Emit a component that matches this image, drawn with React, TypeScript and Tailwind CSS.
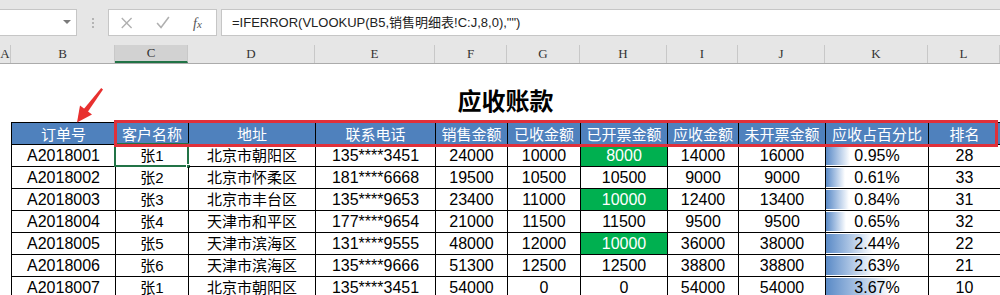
import React from "react";

const cols = [104, 73, 127, 120, 72, 73, 87, 71, 87, 103, 72];
const letters = ["B", "C", "D", "E", "F", "G", "H", "I", "J", "K", "L"];
const headers = ["订单号", "客户名称", "地址", "联系电话", "销售金额", "已收金额", "已开票金额", "应收金额", "未开票金额", "应收占百分比", "排名"];

const rows: [string, string, string, string, number, number, number, number, number, number, number, boolean][] = [
  ["A2018001", "张1", "北京市朝阳区", "135****3451", 24000, 10000, 8000, 14000, 16000, 0.95, 28, true],
  ["A2018002", "张2", "北京市怀柔区", "181****6668", 19500, 10500, 10500, 9000, 9000, 0.61, 33, false],
  ["A2018003", "张3", "北京市丰台区", "135****9653", 23400, 11000, 10000, 12400, 13400, 0.84, 31, true],
  ["A2018004", "张4", "天津市和平区", "177****9654", 21000, 11500, 11500, 9500, 9500, 0.65, 32, false],
  ["A2018005", "张5", "天津市滨海区", "131****9555", 48000, 12000, 10000, 36000, 38000, 2.44, 22, true],
  ["A2018006", "张6", "天津市滨海区", "135****9666", 51300, 12500, 12500, 38800, 38800, 2.63, 21, false],
  ["A2018007", "张1", "北京市朝阳区", "135****3451", 54000, 0, 0, 54000, 54000, 3.67, 10, false],
];

const gridCols = "grid grid-cols-[104px_73px_127px_120px_72px_73px_87px_71px_87px_103px_72px]";

export default function App() {
  return (
    <div
      className="relative w-[1000px] h-[295px] overflow-hidden bg-white"
      style={{ fontFamily: '"Liberation Sans", "Noto Sans CJK SC", sans-serif' }}
    >
      {/* Formula bar */}
      <div className="h-[45px] bg-[#e6e6e6] flex items-start pt-[9px]">
        <div className="relative w-[77px] h-[27px] bg-white border border-l-0 border-[#c6c6c6]">
          <div className="absolute left-[63px] top-[10px] w-0 h-0 border-l-[4px] border-r-[4px] border-t-[4px] border-l-transparent border-r-transparent border-t-[#7a7a7a]" />
        </div>
        <div className="w-[31px] h-[27px] flex flex-col items-center justify-center gap-[2px]">
          <div className="w-[2px] h-[2px] bg-[#b4b4b4]" />
          <div className="w-[2px] h-[2px] bg-[#b4b4b4]" />
          <div className="w-[2px] h-[2px] bg-[#b4b4b4]" />
        </div>
        <div className="relative w-[109px] h-[27px] bg-white border border-[#c6c6c6] flex items-center">
          <svg width="109" height="25" viewBox="0 0 109 25">
            <path d="M13 8 L23 18 M23 8 L13 18" stroke="#b0b0b0" strokeWidth="1.4" fill="none" />
            <path d="M49 13 L53 17.5 L61 7" stroke="#b0b0b0" strokeWidth="1.6" fill="none" />
          </svg>
          <span
            className="absolute left-[84px] top-[3px] text-[14px] italic text-[#555]"
            style={{ fontFamily: '"Liberation Serif", serif' }}
          >
            f<span className="text-[11px]">x</span>
          </span>
        </div>
        <div className="ml-[4px] flex-1 h-[27px] bg-white border border-r-0 border-[#c6c6c6] flex items-center pl-[10px] text-[13px] text-[#222]">
          =IFERROR(VLOOKUP(B5,销售明细表!C:J,8,0),"")
        </div>
      </div>

      {/* Column headers */}
      <div
        className="flex h-[19px] bg-[#e6e6e6] border-b border-[#ababab] text-[13px] text-[#333]"
        style={{ fontFamily: '"Liberation Serif", "DejaVu Serif", serif' }}
      >
        <div className="w-[11px] border-r border-[#c8c8c8] flex items-center justify-center">A</div>
        {letters.map((l, i) => (
          <div
            key={l}
            style={{ width: cols[i] }}
            className={
              "shrink-0 border-r border-[#c8c8c8] flex items-center justify-center " +
              (l === "C" ? "bg-[#d2d2d2] border-b-2 border-b-[#217346]" : "")
            }
          >
            {l}
          </div>
        ))}
      </div>

      {/* Title */}
      <div className="h-[58px] pl-[11px] flex items-end justify-center pb-[6px]">
        <span className="text-[24px] leading-[32px] font-bold text-black" style={{ fontFamily: '"Noto Sans CJK SC", sans-serif' }}>
          应收账款
        </span>
      </div>

      {/* Table */}
      <div className="ml-[11px] border-l border-t border-black">
        <div className={gridCols}>
          {headers.map((h) => (
            <div
              key={h}
              className="h-[22px] border-r border-b border-black bg-[#4f81bd] text-white text-[15px] leading-none flex items-center justify-center"
              style={{ fontFamily: '"Noto Sans CJK SC", sans-serif' }}
            >
              {h}
            </div>
          ))}
        </div>
        {rows.map((r, ri) => (
          <div key={ri} className={gridCols}>
            {[r[0], r[1], r[2], r[3], r[4], r[5], r[6], r[7], r[8]].map((v, ci) => {
              const green = ci === 6 && r[11];
              const cjk = ci === 1 || ci === 2;
              return (
                <div
                  key={ci}
                  className={
                    "relative h-[22px] border-r border-b border-black leading-none flex items-center justify-center " +
                    (cjk ? "text-[15px] " : "text-[16px] ") +
                    (green ? "bg-[#00b050] text-white" : "text-black")
                  }
                >
                  {v}
                  {ri === 0 && ci === 1 && (
                    <div className="absolute left-[-2px] top-[-2px] right-[-1px] bottom-[-1px] border-2 border-[#217346]">
                      <div className="absolute right-[-4px] bottom-[-4px] w-[5px] h-[5px] bg-[#217346] border border-white" />
                    </div>
                  )}
                </div>
              );
            })}
            <div className="relative h-[22px] border-r border-b border-black text-[16px] leading-none flex items-center justify-center text-black">
              <div
                className="absolute left-0 top-[1px] bottom-[1px] bg-gradient-to-r from-[#5a8ac6] to-white"
                style={{ width: 10 + 15 * r[9] }}
              />
              <span className="relative">{r[9].toFixed(2)}%</span>
            </div>
            <div className="h-[22px] border-r border-b border-black text-[16px] leading-none flex items-center justify-center text-black">
              {r[10]}
            </div>
          </div>
        ))}
      </div>

      {/* Red highlight box */}
      <div className="absolute left-[114px] top-[120px] w-[884px] h-[27px] border-[3px] border-[#e0303a]" />

      {/* Red arrow */}
      <svg className="absolute left-0 top-0" width="1000" height="295" viewBox="0 0 1000 295">
        <path d="M103 89.5 L101.2 88 L83 110 L87 113 Z" fill="#e8302f" />
        <polygon points="77,122.5 92,114.5 80,105.5" fill="#e8302f" />
      </svg>
    </div>
  );
}
